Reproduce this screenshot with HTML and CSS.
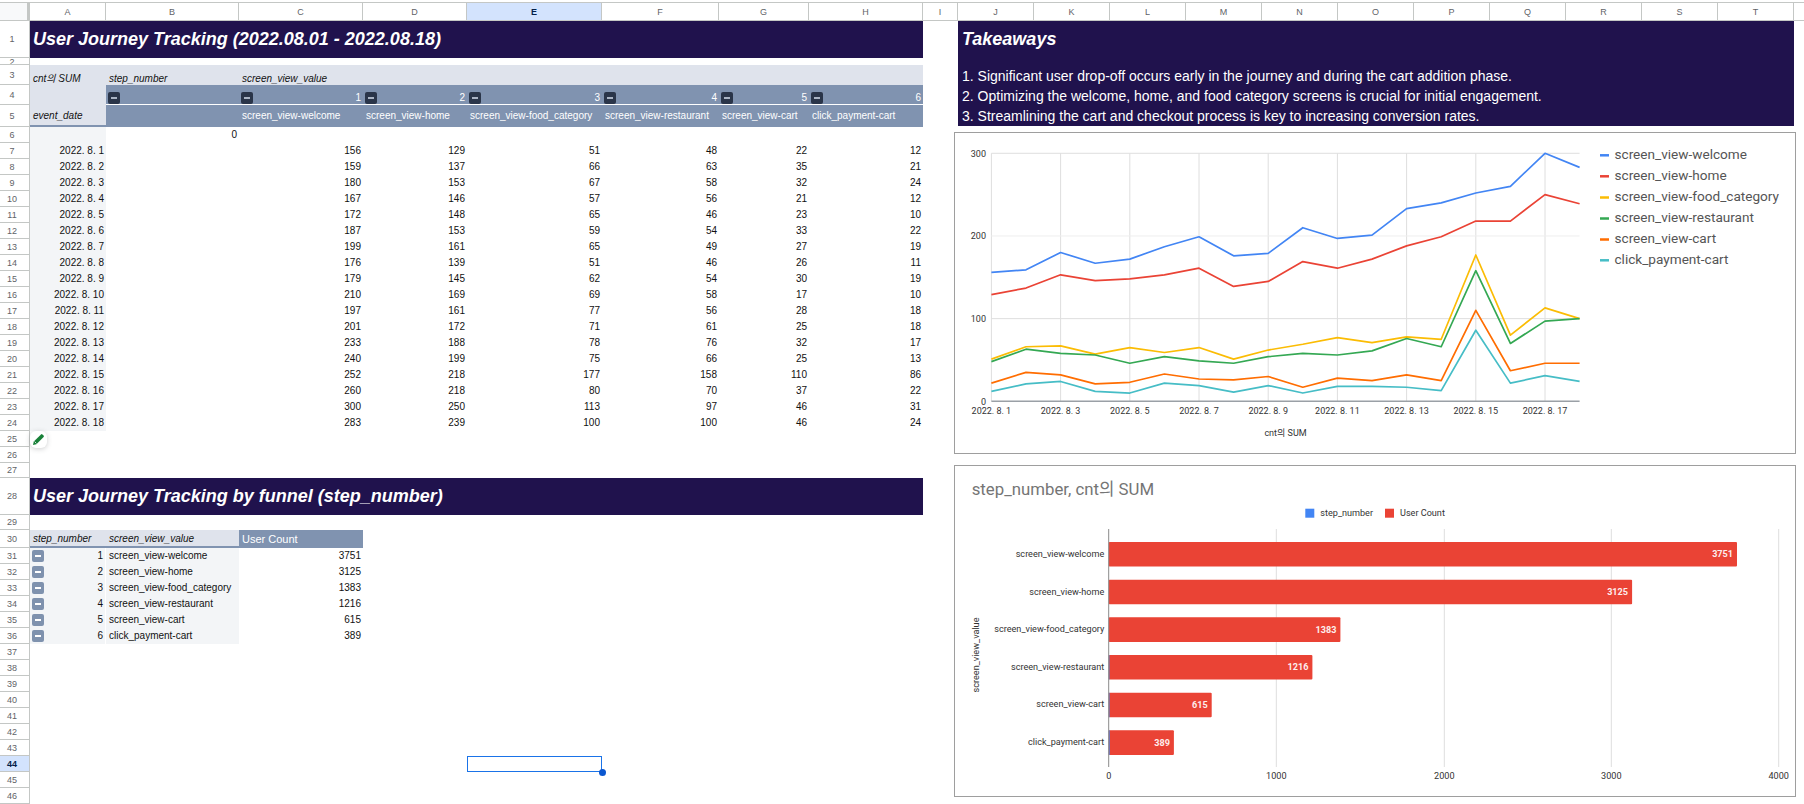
FILE: index.html
```html
<!DOCTYPE html>
<html lang="en">
<head>
<meta charset="utf-8">
<title>User Journey Tracking</title>
<link rel="stylesheet" href="styles.css">
</head>
<body>
<div class="app">
  <div class="colbar">
    <div class="corner"></div>
    <div class="ch">A</div><div class="ch">B</div><div class="ch">C</div><div class="ch">D</div><div class="ch on">E</div><div class="ch">F</div><div class="ch">G</div><div class="ch">H</div><div class="ch">I</div><div class="ch">J</div><div class="ch">K</div><div class="ch">L</div><div class="ch">M</div><div class="ch">N</div><div class="ch">O</div><div class="ch">P</div><div class="ch">Q</div><div class="ch">R</div><div class="ch">S</div><div class="ch">T</div>
  </div>
  <div class="main">
    <div class="rowbar">
      <div class="rh h37">1</div><div class="rh h7 tiny">2</div><div class="rh h20">3</div><div class="rh h20">4</div><div class="rh h22">5</div>
      <div class="rh">6</div><div class="rh">7</div><div class="rh">8</div><div class="rh">9</div><div class="rh">10</div><div class="rh">11</div><div class="rh">12</div><div class="rh">13</div><div class="rh">14</div><div class="rh">15</div><div class="rh">16</div><div class="rh">17</div><div class="rh">18</div><div class="rh">19</div><div class="rh">20</div><div class="rh">21</div><div class="rh">22</div><div class="rh">23</div><div class="rh">24</div><div class="rh">25</div><div class="rh">26</div><div class="rh h15">27</div>
      <div class="rh h37">28</div><div class="rh h15">29</div><div class="rh h18">30</div>
      <div class="rh">31</div><div class="rh">32</div><div class="rh">33</div><div class="rh">34</div><div class="rh">35</div><div class="rh">36</div><div class="rh">37</div><div class="rh">38</div><div class="rh">39</div><div class="rh">40</div><div class="rh">41</div><div class="rh">42</div><div class="rh">43</div><div class="rh on">44</div><div class="rh">45</div><div class="rh">46</div>
    </div>

    <div class="left">
      <div class="r h37"><div class="title">User Journey Tracking (2022.08.01 - 2022.08.18)</div></div>
      <div class="r h7"></div>
      <div class="r h20 low">
        <div class="c light it">cnt의 SUM</div><div class="c light it">step_number</div><div class="c light it">screen_view_value</div><div class="c light s5"></div>
      </div>
      <div class="r h20 low">
        <div class="c light"></div>
        <div class="c mid sp"><i class="tog"></i></div>
        <div class="c mid sp"><i class="tog"></i>1</div>
        <div class="c mid sp"><i class="tog"></i>2</div>
        <div class="c mid sp"><i class="tog"></i>3</div>
        <div class="c mid sp"><i class="tog"></i>4</div>
        <div class="c mid sp"><i class="tog"></i>5</div>
        <div class="c mid sp"><i class="tog"></i>6</div>
      </div>
      <div class="r h22">
        <div class="c light it edge">event_date</div><div class="c mid"></div>
        <div class="c mid">screen_view-welcome</div><div class="c mid">screen_view-home</div><div class="c mid">screen_view-food_category</div><div class="c mid">screen_view-restaurant</div><div class="c mid">screen_view-cart</div><div class="c mid">click_payment-cart</div>
      </div>
      <div class="r"><div class="c pale"></div><div class="c num">0</div></div>
      <div class="r"><div class="c pale num">2022. 8. 1</div><div class="c"></div><div class="c num">156</div><div class="c num">129</div><div class="c num">51</div><div class="c num">48</div><div class="c num">22</div><div class="c num">12</div></div>
      <div class="r"><div class="c pale num">2022. 8. 2</div><div class="c"></div><div class="c num">159</div><div class="c num">137</div><div class="c num">66</div><div class="c num">63</div><div class="c num">35</div><div class="c num">21</div></div>
      <div class="r"><div class="c pale num">2022. 8. 3</div><div class="c"></div><div class="c num">180</div><div class="c num">153</div><div class="c num">67</div><div class="c num">58</div><div class="c num">32</div><div class="c num">24</div></div>
      <div class="r"><div class="c pale num">2022. 8. 4</div><div class="c"></div><div class="c num">167</div><div class="c num">146</div><div class="c num">57</div><div class="c num">56</div><div class="c num">21</div><div class="c num">12</div></div>
      <div class="r"><div class="c pale num">2022. 8. 5</div><div class="c"></div><div class="c num">172</div><div class="c num">148</div><div class="c num">65</div><div class="c num">46</div><div class="c num">23</div><div class="c num">10</div></div>
      <div class="r"><div class="c pale num">2022. 8. 6</div><div class="c"></div><div class="c num">187</div><div class="c num">153</div><div class="c num">59</div><div class="c num">54</div><div class="c num">33</div><div class="c num">22</div></div>
      <div class="r"><div class="c pale num">2022. 8. 7</div><div class="c"></div><div class="c num">199</div><div class="c num">161</div><div class="c num">65</div><div class="c num">49</div><div class="c num">27</div><div class="c num">19</div></div>
      <div class="r"><div class="c pale num">2022. 8. 8</div><div class="c"></div><div class="c num">176</div><div class="c num">139</div><div class="c num">51</div><div class="c num">46</div><div class="c num">26</div><div class="c num">11</div></div>
      <div class="r"><div class="c pale num">2022. 8. 9</div><div class="c"></div><div class="c num">179</div><div class="c num">145</div><div class="c num">62</div><div class="c num">54</div><div class="c num">30</div><div class="c num">19</div></div>
      <div class="r"><div class="c pale num">2022. 8. 10</div><div class="c"></div><div class="c num">210</div><div class="c num">169</div><div class="c num">69</div><div class="c num">58</div><div class="c num">17</div><div class="c num">10</div></div>
      <div class="r"><div class="c pale num">2022. 8. 11</div><div class="c"></div><div class="c num">197</div><div class="c num">161</div><div class="c num">77</div><div class="c num">56</div><div class="c num">28</div><div class="c num">18</div></div>
      <div class="r"><div class="c pale num">2022. 8. 12</div><div class="c"></div><div class="c num">201</div><div class="c num">172</div><div class="c num">71</div><div class="c num">61</div><div class="c num">25</div><div class="c num">18</div></div>
      <div class="r"><div class="c pale num">2022. 8. 13</div><div class="c"></div><div class="c num">233</div><div class="c num">188</div><div class="c num">78</div><div class="c num">76</div><div class="c num">32</div><div class="c num">17</div></div>
      <div class="r"><div class="c pale num">2022. 8. 14</div><div class="c"></div><div class="c num">240</div><div class="c num">199</div><div class="c num">75</div><div class="c num">66</div><div class="c num">25</div><div class="c num">13</div></div>
      <div class="r"><div class="c pale num">2022. 8. 15</div><div class="c"></div><div class="c num">252</div><div class="c num">218</div><div class="c num">177</div><div class="c num">158</div><div class="c num">110</div><div class="c num">86</div></div>
      <div class="r"><div class="c pale num">2022. 8. 16</div><div class="c"></div><div class="c num">260</div><div class="c num">218</div><div class="c num">80</div><div class="c num">70</div><div class="c num">37</div><div class="c num">22</div></div>
      <div class="r"><div class="c pale num">2022. 8. 17</div><div class="c"></div><div class="c num">300</div><div class="c num">250</div><div class="c num">113</div><div class="c num">97</div><div class="c num">46</div><div class="c num">31</div></div>
      <div class="r"><div class="c pale num">2022. 8. 18</div><div class="c"></div><div class="c num">283</div><div class="c num">239</div><div class="c num">100</div><div class="c num">100</div><div class="c num">46</div><div class="c num">24</div></div>
      <div class="r"></div>
      <div class="r"></div>
      <div class="r h15"></div>
      <div class="r h37"><div class="title">User Journey Tracking by funnel (step_number)</div></div>
      <div class="r h15"></div>
      <div class="r h18">
        <div class="c light it edge">step_number</div><div class="c light it edge">screen_view_value</div><div class="c mid big">User Count</div>
      </div>
      <div class="r"><div class="c pale sp gap"><i class="tog soft"></i>1</div><div class="c pale">screen_view-welcome</div><div class="c num">3751</div></div>
      <div class="r"><div class="c pale sp gap"><i class="tog soft"></i>2</div><div class="c pale">screen_view-home</div><div class="c num">3125</div></div>
      <div class="r"><div class="c pale sp gap"><i class="tog soft"></i>3</div><div class="c pale">screen_view-food_category</div><div class="c num">1383</div></div>
      <div class="r"><div class="c pale sp gap"><i class="tog soft"></i>4</div><div class="c pale">screen_view-restaurant</div><div class="c num">1216</div></div>
      <div class="r"><div class="c pale sp gap"><i class="tog soft"></i>5</div><div class="c pale">screen_view-cart</div><div class="c num">615</div></div>
      <div class="r"><div class="c pale sp gap"><i class="tog soft"></i>6</div><div class="c pale">click_payment-cart</div><div class="c num">389</div></div>
      <div class="r"></div><div class="r"></div><div class="r"></div><div class="r"></div><div class="r"></div><div class="r"></div><div class="r"></div>
      <div class="r"><div class="c"></div><div class="c"></div><div class="c"></div><div class="c"></div><div class="c sel"></div></div>
    </div>

    <div class="right">
      <div class="take">
        <div class="take-title">Takeaways</div>
        <p>1. Significant user drop-off occurs early in the journey and during the cart addition phase.</p>
        <p>2. Optimizing the welcome, home, and food category screens is crucial for initial engagement.</p>
        <p>3. Streamlining the cart and checkout process is key to increasing conversion rates.</p>
      </div>

      <div class="chart line-chart">
        <svg width="840" height="320" viewBox="0 0 840 320">
          <g transform="translate(36.4 268.3) scale(34.6 -0.8267)">
            <g class="grid">
              <line x1="0" x2="0" y1="0" y2="300"/><line x1="2" x2="2" y1="0" y2="300"/><line x1="4" x2="4" y1="0" y2="300"/><line x1="6" x2="6" y1="0" y2="300"/><line x1="8" x2="8" y1="0" y2="300"/><line x1="10" x2="10" y1="0" y2="300"/><line x1="12" x2="12" y1="0" y2="300"/><line x1="14" x2="14" y1="0" y2="300"/><line x1="16" x2="16" y1="0" y2="300"/>
              <line x1="0" x2="17" y1="300" y2="300"/><line x1="0" x2="17" y1="200" y2="200" class="soft"/><line x1="0" x2="17" y1="100" y2="100"/>
              <line x1="0" x2="17" y1="0" y2="0" class="axis"/>
            </g>
            <polyline class="s s1" points="0,156 1,159 2,180 3,167 4,172 5,187 6,199 7,176 8,179 9,210 10,197 11,201 12,233 13,240 14,252 15,260 16,300 17,283"/>
            <polyline class="s s2" points="0,129 1,137 2,153 3,146 4,148 5,153 6,161 7,139 8,145 9,169 10,161 11,172 12,188 13,199 14,218 15,218 16,250 17,239"/>
            <polyline class="s s3" points="0,51 1,66 2,67 3,57 4,65 5,59 6,65 7,51 8,62 9,69 10,77 11,71 12,78 13,75 14,177 15,80 16,113 17,100"/>
            <polyline class="s s4" points="0,48 1,63 2,58 3,56 4,46 5,54 6,49 7,46 8,54 9,58 10,56 11,61 12,76 13,66 14,158 15,70 16,97 17,100"/>
            <polyline class="s s5" points="0,22 1,35 2,32 3,21 4,23 5,33 6,27 7,26 8,30 9,17 10,28 11,25 12,32 13,25 14,110 15,37 16,46 17,46"/>
            <polyline class="s s6" points="0,12 1,21 2,24 3,12 4,10 5,22 6,19 7,11 8,19 9,10 10,18 11,18 12,17 13,13 14,86 15,22 16,31 17,24"/>
          </g>
          <g class="tick end">
            <text x="31" y="23.5">300</text><text x="31" y="106">200</text><text x="31" y="189">100</text><text x="31" y="271.5">0</text>
          </g>
          <g class="tick mid-t">
            <text x="36.4" y="281">2022. 8. 1</text><text x="105.6" y="281">2022. 8. 3</text><text x="174.8" y="281">2022. 8. 5</text><text x="244" y="281">2022. 8. 7</text><text x="313.2" y="281">2022. 8. 9</text><text x="382.4" y="281">2022. 8. 11</text><text x="451.6" y="281">2022. 8. 13</text><text x="520.8" y="281">2022. 8. 15</text><text x="590" y="281">2022. 8. 17</text>
            <text x="330.5" y="303">cnt의 SUM</text>
          </g>
          <g class="legend">
            <line class="k1" x1="645" x2="654" y1="22.3" y2="22.3"/><text x="659.5" y="26.2">screen_view-welcome</text>
            <line class="k2" x1="645" x2="654" y1="43.3" y2="43.3"/><text x="659.5" y="47.2">screen_view-home</text>
            <line class="k3" x1="645" x2="654" y1="64.5" y2="64.5"/><text x="659.5" y="68.4">screen_view-food_category</text>
            <line class="k4" x1="645" x2="654" y1="85.5" y2="85.5"/><text x="659.5" y="89.4">screen_view-restaurant</text>
            <line class="k5" x1="645" x2="654" y1="106.5" y2="106.5"/><text x="659.5" y="110.4">screen_view-cart</text>
            <line class="k6" x1="645" x2="654" y1="127.3" y2="127.3"/><text x="659.5" y="131.2">click_payment-cart</text>
          </g>
        </svg>
      </div>

      <div class="chart bar-chart">
        <svg width="840" height="330" viewBox="0 0 840 330">
          <text class="bar-title" x="16.7" y="28.5">step_number, cnt의 SUM</text>
          <rect class="fill-b" x="350.3" y="42.7" width="9" height="9"/>
          <text class="small" x="365.3" y="49.6">step_number</text>
          <rect class="fill-r" x="430" y="42.7" width="9" height="9"/>
          <text class="small" x="445" y="49.6">User Count</text>
          <g class="grid">
            <line x1="321.3" x2="321.3" y1="63" y2="301"/><line x1="489.3" x2="489.3" y1="63" y2="301"/><line x1="656.3" x2="656.3" y1="63" y2="301"/><line x1="823.7" x2="823.7" y1="63" y2="301"/>
          </g>
          <rect class="fill-r" x="153.7" y="76" width="628.3" height="24.6" rx="1"/>
          <rect class="fill-r" x="153.7" y="113.7" width="523.4" height="24.6" rx="1"/>
          <rect class="fill-r" x="153.7" y="151.3" width="231.7" height="24.6" rx="1"/>
          <rect class="fill-r" x="153.7" y="189" width="203.7" height="24.6" rx="1"/>
          <rect class="fill-r" x="153.7" y="226.7" width="103" height="24.6" rx="1"/>
          <rect class="fill-r" x="153.7" y="264.3" width="65.2" height="24.6" rx="1"/>
          <rect class="fill-b" x="153.7" y="189" width="0.7" height="24.6"/>
          <rect class="fill-b" x="153.7" y="226.7" width="0.8" height="24.6"/>
          <rect class="fill-b" x="153.7" y="264.3" width="1" height="24.6"/>
          <line class="baxis" x1="153.7" x2="153.7" y1="63" y2="301"/>
          <g class="val">
            <text x="778" y="91.2">3751</text><text x="673" y="129">3125</text><text x="381.4" y="166.7">1383</text><text x="353.4" y="204.3">1216</text><text x="252.7" y="241.9">615</text><text x="214.9" y="279.7">389</text>
          </g>
          <g class="cat">
            <text x="149.3" y="90.6">screen_view-welcome</text><text x="149.3" y="128.6">screen_view-home</text><text x="149.3" y="166.2">screen_view-food_category</text><text x="149.3" y="203.6">screen_view-restaurant</text><text x="149.3" y="241.2">screen_view-cart</text><text x="149.3" y="278.9">click_payment-cart</text>
          </g>
          <g class="xt">
            <text x="153.7" y="313">0</text><text x="321.3" y="313">1000</text><text x="489.3" y="313">2000</text><text x="656.3" y="313">3000</text><text x="823.7" y="313">4000</text>
          </g>
          <text class="small ytitle" transform="translate(24 189) rotate(-90)">screen_view_value</text>
        </svg>
      </div>
    </div>
  </div>

  <button class="pencil" type="button" aria-label="Edit">
    <svg width="13" height="13" viewBox="0 0 13 13"><path d="M1 12l.8-3.4L9 1.4a1 1 0 0 1 1.4 0l1.2 1.2a1 1 0 0 1 0 1.4L4.4 11.2z" fill="#188038"/><path d="M2.6 8.6l1.8 1.8" stroke="#fff" stroke-width=".8"/></svg>
  </button>
</div>
</body>
</html>
```

FILE: styles.css
```css
* { box-sizing: border-box; }
html, body { margin: 0; padding: 0; background: #fff; }
body { font-family: "Liberation Sans", Arial, "Noto Sans CJK KR", sans-serif; font-size: 10px; color: #111; }

.app { position: relative; width: 1804px; height: 804px; overflow: hidden; }

.colbar, .r { --cols: 76px 133px 124px 104px 135px 117px 90px 114px; }

/* column header */
.colbar {
  display: grid;
  grid-template-columns: 30px 76px 133px 124px 104px 135px 117px 90px 114px 35px repeat(11, 76px);
  height: 19px;
  margin-top: 2px;
  border-top: 1px solid #c4c7c5;
  border-bottom: 1px solid #c4c7c5;
}
.corner { background: #f8f9fa; border-right: 3px solid #c4c7c5; }
.ch {
  display: flex; align-items: center; justify-content: center;
  border-right: 1px solid #c4c7c5;
  font-size: 9px; color: #5f6368;
}
.ch.on { background: #d3e3fd; color: #041e49; font-weight: 700; }

.main { display: flex; }

/* row header */
.rowbar { flex: none; width: 30px; border-right: 1px solid #c4c7c5; }
.rh {
  display: flex; align-items: center; justify-content: center;
  height: 16px;
  padding-right: 5px;
  border-bottom: 1px solid #c4c7c5;
  font-size: 9px; color: #5f6368;
  overflow: hidden;
}
.rh.on { background: #d3e3fd; color: #041e49; font-weight: 700; }
.rh.tiny { align-items: flex-start; line-height: 8px; }

.h37.h37 { height: 37px; }
.h7.h7 { height: 7px; }
.h20.h20 { height: 20px; }
.h22.h22 { height: 22px; }
.h15.h15 { height: 15px; }
.h18.h18 { height: 18px; }

/* cells */
.left { flex: none; width: 924px; }
.r {
  display: grid;
  grid-template-columns: var(--cols);
  height: 16px;
}
.c {
  display: flex; align-items: center;
  min-width: 0;
  padding: 0 3px;
  white-space: nowrap;
  line-height: 14px;
}
.low .c { align-items: flex-end; line-height: 12px; }
.num { justify-content: flex-end; padding-right: 2px; }
.it { font-style: italic; }
.s5 { grid-column: span 5; }
.big { font-size: 11px; }
.light { background: #dfe3ec; }
.mid { background: #8093b0; color: #fff; }
.pale { background: #f3f5f7; }
.edge { padding-top: 2px; border-bottom: 2px solid #8093b0; }
.low .mid { border-bottom: 1px solid #fff; }
.sp { justify-content: space-between; padding-left: 2px; padding-right: 2px; }
.gap { border-right: 1px solid #fff; }

.tog {
  display: flex; align-items: center; justify-content: center;
  flex: none;
  width: 12px; height: 12px;
  border-radius: 2px;
  background: #2a3549;
}
.tog::before { content: ""; width: 6px; height: 2px; background: #aab4c4; }
.tog.soft { background: #7f92ae; }
.tog.soft::before { background: #fff; }

.title {
  grid-column: 1 / -1;
  display: flex; align-items: center;
  padding-left: 3px;
  background: #20124d;
  color: #fff;
  font-size: 18px; font-weight: 700; font-style: italic;
  white-space: nowrap;
}

.sel { position: relative; padding: 0; border: 1px solid #1a73e8; }
.sel::after {
  content: ""; position: absolute; right: -5px; bottom: -5px;
  width: 7px; height: 7px; border-radius: 50%;
  background: #0b57d0;
}

/* right-hand floating objects */
.right { flex: none; width: 842px; }
.take {
  margin-left: 4px;
  width: 836px; height: 105px;
  padding-left: 4px;
  background: #20124d;
  color: #fff;
  font-size: 14px;
}
.take-title {
  height: 45px;
  padding-top: 7px;
  line-height: 23px;
  font-size: 18px; font-weight: 700; font-style: italic;
}
.take p { margin: 0; line-height: 20px; white-space: nowrap; }

.chart { width: 842px; border: 1px solid #9e9e9e; background: #fff; font-family: Roboto, "Noto Sans CJK KR", sans-serif; }
.chart svg { display: block; }
.line-chart { height: 322px; margin-top: 6px; }
.bar-chart { height: 332px; margin-top: 11px; }

.grid line { stroke: #dedede; stroke-width: 1; vector-effect: non-scaling-stroke; }
.grid line.soft { stroke: #eeeeee; }
.grid line.axis { stroke: #9aa0a6; stroke-width: 1.5; }
.s { fill: none; stroke-width: 1.7; stroke-linejoin: round; vector-effect: non-scaling-stroke; }
.s1 { stroke: #4285f4; } .s2 { stroke: #ea4335; } .s3 { stroke: #fbbc04; }
.s4 { stroke: #34a853; } .s5 { stroke: #ff6d01; } .s6 { stroke: #46bdc6; }
.k1, .k2, .k3, .k4, .k5, .k6 { stroke-width: 2.5; }
.k1 { stroke: #4285f4; } .k2 { stroke: #ea4335; } .k3 { stroke: #fbbc04; }
.k4 { stroke: #34a853; } .k5 { stroke: #ff6d01; } .k6 { stroke: #46bdc6; }

.tick text { font-size: 9px; fill: #333; }
.tick.end text { text-anchor: end; }
.tick.mid-t text { text-anchor: middle; }
.legend text { font-size: 13.6px; fill: #555; }

.bar-title { font-size: 16.8px; fill: #757575; }
.small { font-size: 9.1px; fill: #333; }
.fill-b { fill: #4285f4; }
.fill-r { fill: #ea4335; }
.baxis { stroke: #8a8a8a; stroke-width: 1; }
.val text { font-size: 9.1px; font-weight: 700; fill: #fdeeed; text-anchor: end; }
.cat text { font-size: 9.1px; fill: #333; text-anchor: end; }
.xt text { font-size: 9.1px; fill: #333; text-anchor: middle; }
.ytitle { text-anchor: middle; }

.pencil {
  position: absolute; left: 30px; top: 431px;
  display: flex; align-items: center; justify-content: center;
  width: 17px; height: 17px;
  padding: 0;
  border: 0; border-radius: 6px;
  background: #fff;
  box-shadow: 0 1px 5px rgba(60, 64, 67, .25);
}
```
